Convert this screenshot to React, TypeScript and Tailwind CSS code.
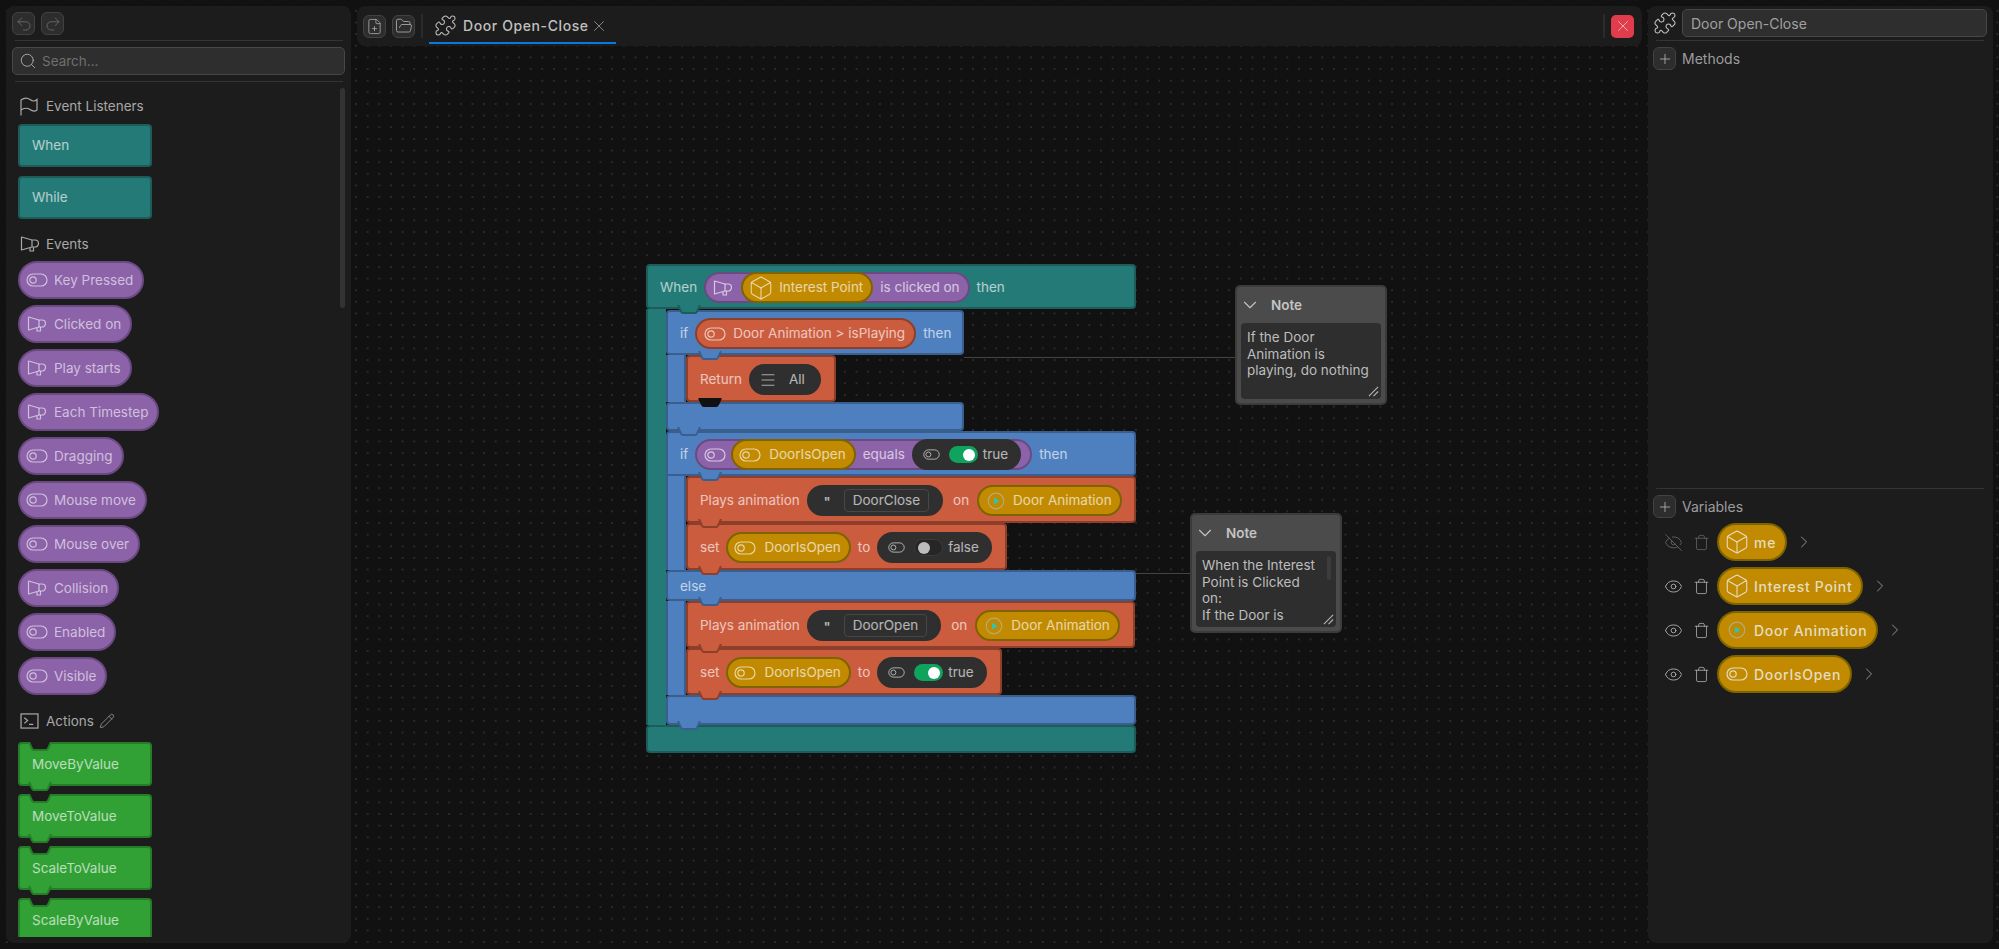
import { ReactNode } from "react";
import {
  Box,
  ChevronDown,
  ChevronRight,
  Eye,
  EyeOff,
  FilePlus,
  FolderOpen,
  Menu,
  Pencil,
  Plus,
  Puzzle,
  Redo2,
  Search,
  Trash,
  Undo2,
  X,
} from "lucide-react";

const PURPLE = "bg-[#8c62a9] border-[#6b4a82]";
const YELLOW = "bg-[#c18a00] border-[#7d6400]";
const ORANGE = "bg-[#cb5c3e] border-[#8e3f2b]";
const DARK = "bg-[#2f2f2f] border-[#2f2f2f]";

const ToggleIcon = ({ className = "" }: { className?: string }) => (
  <svg viewBox="0 0 22 14" fill="none" stroke="currentColor" strokeWidth="1.2" className={`w-[22px] h-[14px] shrink-0 ${className}`}>
    <rect x="1" y="1" width="20" height="12" rx="6" />
    <circle cx="7" cy="7" r="3.2" />
  </svg>
);

const MegaphoneIcon = ({ className = "" }: { className?: string }) => (
  <svg viewBox="0 0 20 16" fill="none" stroke="currentColor" strokeWidth="1.2" strokeLinejoin="round" className={`w-[20px] h-[16px] shrink-0 ${className}`}>
    <path d="M1.5 1 L12 4 H15 a3.5 3.5 0 0 1 0 7 H12 L1.5 14 Z" />
    <path d="M12 4 V11" />
    <path d="M10 12 v3 h3.5 v-4" />
  </svg>
);

const FlagIcon = () => (
  <svg viewBox="0 0 18 19" fill="none" stroke="currentColor" strokeWidth="1.2" className="w-[18px] h-[19px] shrink-0 text-[#a8a8a8]">
    <path d="M1 18.5 V3 C5 0 8 1 10 2.5 C12 4 15 4.5 17 2.5 V13 C14.5 15 12 14 10 12.5 C8 11 4 10.5 1 13" />
  </svg>
);

const TerminalIcon = () => (
  <svg viewBox="0 0 20 17" fill="none" stroke="currentColor" strokeWidth="1.3" className="w-[19px] h-[16px] shrink-0">
    <rect x="1" y="1" width="18" height="15" />
    <path d="M4.5 5 L8 8 L4.5 11 M9.5 12 H14" />
  </svg>
);

const PlayIcon = () => (
  <svg viewBox="0 0 18 18" className="w-[18px] h-[18px] shrink-0" fill="none">
    <circle cx="9" cy="9" r="7.8" stroke="#b8a878" strokeWidth="1.2" />
    <path d="M7 5.5 L12.5 9 L7 12.5 Z" fill="#2cc5b5" />
  </svg>
);

const CubeIcon = () => <Box size={26} strokeWidth={1} className="-mx-[3px] shrink-0" />;

const ResizeIcon = () => (
  <svg viewBox="0 0 12 12" fill="none" stroke="#b5b5b5" strokeWidth="1.2" className="absolute right-[2px] bottom-[2px] w-[11px] h-[11px]">
    <path d="M1 11 L11 1 M6 11 L11 6" />
  </svg>
);

// trapezoid tab under a block, it sits on top of the next block
const Bump = ({ fill, stroke, className }: { fill: string; stroke: string; className: string }) => (
  <svg viewBox="0 0 24 9" width="24" height="9" className={`absolute z-10 ${className}`}>
    <path d="M1 0 L4 6.5 Q4.5 8 6 8 H18 Q19.5 8 20 6.5 L23 0 Z" fill={fill} />
    <path d="M1 0 L4 6.5 Q4.5 8 6 8 H18 Q19.5 8 20 6.5 L23 0" fill="none" stroke={stroke} strokeWidth="2" />
  </svg>
);

const Pill = ({ color, className = "", children }: { color: string; className?: string; children: ReactNode }) => (
  <div className={`flex items-center h-[31px] rounded-full border-2 shrink-0 whitespace-nowrap ${color} ${className}`}>{children}</div>
);

const Switch = ({ on }: { on: boolean }) => (
  <div className={`flex items-center w-[29px] h-[17px] rounded-full px-[3px] ${on ? "bg-[#10a35d] justify-end" : "bg-[#262626] border border-[#3b3b3b] justify-start"}`}>
    <div className={`w-[12px] h-[12px] rounded-full ${on ? "bg-white" : "bg-[#bdbdbd]"}`} />
  </div>
);

const VarPill = ({ icon, label, className = "pl-[8px]" }: { icon: ReactNode; label: string; className?: string }) => (
  <Pill color={YELLOW} className={`pr-[8px] gap-[8px] ${className}`}>
    {icon}
    <span>{label}</span>
  </Pill>
);

const BoolValue = ({ on, label }: { on: boolean; label: string }) => (
  <Pill color={DARK} className="pl-[9px] pr-[11px]">
    <ToggleIcon className="!w-[17px] !h-[11px] mr-[9px]" />
    <Switch on={on} />
    <span className="ml-[5px]">{label}</span>
  </Pill>
);

const StringValue = ({ label }: { label: string }) => (
  <Pill color={DARK} className="pl-[15px] pr-[12px]">
    <span className="w-[20px] text-[12px] font-bold leading-none mt-[3px]">"</span>
    <span className="flex items-center h-[23px] px-[8px] border border-[#474747] rounded-[4px]">{label}</span>
  </Pill>
);

const ActionBlock = ({ width, dark, children }: { width: string; dark?: boolean; children: ReactNode }) => (
  <div className={`relative flex items-center h-[47px] pl-[12px] pt-[2px] gap-[7px] rounded-[4px] border-2 whitespace-nowrap ${ORANGE} ${width}`}>
    {children}
    <Bump
      fill={dark ? "#111111" : "#cb5c3e"}
      stroke={dark ? "#111111" : "#8e3f2b"}
      className="top-full -mt-[2px] left-[10px]"
    />
  </div>
);

const BlueBar = ({ children, width = "w-full", h, bump = true, className = "" }: { children?: ReactNode; width?: string; h: string; bump?: boolean; className?: string }) => (
  <div className={`relative flex items-center pl-[12px] pt-[2px] gap-[7px] bg-[#4e80bf] border-2 border-[#3a5f8f] rounded-[4px] ${h} ${width} ${className}`}>
    {children}
    {bump && <Bump fill="#4e80bf" stroke="#3a5f8f" className="top-full -mt-[2px] left-[9px]" />}
  </div>
);

const BlueRail = ({ children }: { children: ReactNode }) => (
  <div className="flex">
    <div className="w-[20px] shrink-0 bg-[#4e80bf] border-l-2 border-r-2 border-[#3a5f8f]" />
    <div className="flex flex-col flex-1 items-start">{children}</div>
  </div>
);

const RootBlock = () => (
  <div className="absolute left-[289px] top-[258px] w-[490px] flex flex-col text-[13.5px] text-white/65">
    <div className="relative flex items-center h-[45px] pl-[12px] pt-[2px] gap-[7px] bg-[#247a76] border-2 border-[#1d5c59] rounded-[4px]">
      <span>When</span>
      <Pill color={PURPLE} className="pl-[7px] pr-[8px]">
        <MegaphoneIcon className="mr-[8px]" />
        <VarPill icon={<CubeIcon />} label="Interest Point" className="pl-[8px] -my-[2px] mr-[7px]" />
        <span>is clicked on</span>
      </Pill>
      <span>then</span>
      <Bump fill="#247a76" stroke="#1d5c59" className="top-full -mt-[2px] left-[29px]" />
    </div>
    <div className="flex">
      <div className="w-[20px] shrink-0 bg-[#247a76] border-l-2 border-[#1d5c59]" />
      <div className="flex flex-col flex-1 items-start">
        <div className="w-[298px] h-[1px]" />
        <BlueBar h="h-[45px]" width="w-[298px]" bump={false}>
          <span>if</span>
          <Pill color={ORANGE} className="pl-[7px] pr-[9px] gap-[7px]">
            <ToggleIcon />
            <span>Door Animation &gt; isPlaying</span>
          </Pill>
          <span>then</span>
          <Bump fill="#4e80bf" stroke="#3a5f8f" className="top-full -mt-[2px] left-[30px]" />
        </BlueBar>
        <div className="w-[298px]">
          <BlueRail>
            <ActionBlock width="w-[150px]" dark>
              <span>Return</span>
              <Pill color={DARK} className="pl-[8px] pr-[14px]">
                <Menu size={18} strokeWidth={1.2} className="mr-[12px]" />
                <span>All</span>
              </Pill>
            </ActionBlock>
          </BlueRail>
        </div>
        <BlueBar h="h-[29px]" width="w-[298px]" />
        <BlueBar h="h-[45px]" className="rounded-bl-none" bump={false}>
          <span>if</span>
          <Pill color={PURPLE} className="pl-[7px] pr-[9px]">
            <ToggleIcon className="mr-[5px]" />
            <Pill color={YELLOW} className="pl-[6px] pr-[8px] gap-[8px] -my-[2px] mr-[7px]">
              <ToggleIcon />
              <span>DoorIsOpen</span>
            </Pill>
            <span className="mr-[7px]">equals</span>
            <BoolValue on label="true" />
          </Pill>
          <span>then</span>
          <Bump fill="#4e80bf" stroke="#3a5f8f" className="top-full -mt-[2px] left-[30px]" />
        </BlueBar>
        <div className="w-full">
          <BlueRail>
            <ActionBlock width="w-full">
              <span>Plays animation</span>
              <StringValue label="DoorClose" />
              <span className="ml-[3px] mr-[1px]">on</span>
              <VarPill icon={<PlayIcon />} label="Door Animation" />
            </ActionBlock>
            <ActionBlock width="w-[321px]">
              <span>set</span>
              <VarPill icon={<ToggleIcon />} label="DoorIsOpen" className="pl-[6px]" />
              <span>to</span>
              <BoolValue on={false} label="false" />
            </ActionBlock>
          </BlueRail>
        </div>
        <BlueBar h="h-[31px]" bump={false}>
          <span>else</span>
          <Bump fill="#4e80bf" stroke="#3a5f8f" className="top-full -mt-[2px] left-[30px]" />
        </BlueBar>
        <div className="w-full">
          <BlueRail>
            <ActionBlock width="w-[449px]">
              <span>Plays animation</span>
              <StringValue label="DoorOpen" />
              <span className="ml-[3px] mr-[1px]">on</span>
              <VarPill icon={<PlayIcon />} label="Door Animation" />
            </ActionBlock>
            <ActionBlock width="w-[316px]">
              <span>set</span>
              <VarPill icon={<ToggleIcon />} label="DoorIsOpen" className="pl-[6px]" />
              <span>to</span>
              <BoolValue on label="true" />
            </ActionBlock>
          </BlueRail>
        </div>
        <BlueBar h="h-[30px]" />
      </div>
    </div>
    <div className="h-[28px] bg-[#247a76] border-2 border-[#1d5c59] rounded-[4px]" />
  </div>
);

const Note = ({ className, lines, scroll }: { className: string; lines: string[]; scroll?: boolean }) => (
  <div className={`absolute w-[152px] h-[120px] bg-[#4b4b4b] border-2 border-[#3b3b3b] rounded-[5px] p-[4px] flex flex-col ${className}`}>
    <div className="flex items-center h-[28px] mb-[4px] text-[#c4c4c4] text-[13.5px] font-semibold shrink-0">
      <ChevronDown size={22} strokeWidth={1.2} className="-ml-[2px] mr-[10px]" />
      Note
    </div>
    <div className="relative flex-1 overflow-hidden bg-[#2e2e2e] rounded-[4px] px-[6px] pt-[6px] text-[13.5px] leading-[16.5px] text-[#bdbdbd]">
      {lines.map((line) => (
        <div key={line} className="whitespace-nowrap">{line}</div>
      ))}
      {scroll && <div className="absolute right-[5px] top-[5px] w-[4px] h-[24px] bg-[#3c3c3c] rounded-full" />}
      <ResizeIcon />
    </div>
  </div>
);

const IconButton = ({ children, dim }: { children: ReactNode; dim?: boolean }) => (
  <div className={`flex items-center justify-center w-[23px] h-[23px] rounded-[6px] bg-[#2d2d2d] border border-[#424242] shrink-0 ${dim ? "text-[#6a6a6a]" : "text-[#b0b0b0]"}`}>
    {children}
  </div>
);

const SectionTitle = ({ icon, children }: { icon: ReactNode; children: ReactNode }) => (
  <div className="flex items-center h-[20px] pl-[2px] text-[13.5px] text-[#a8a8a8]">
    <div className="w-[26px] text-[#a8a8a8]">{icon}</div>
    {children}
  </div>
);

const events = [
  { label: "Key Pressed", kind: "toggle" },
  { label: "Clicked on", kind: "mega" },
  { label: "Play starts", kind: "mega" },
  { label: "Each Timestep", kind: "mega" },
  { label: "Dragging", kind: "toggle" },
  { label: "Mouse move", kind: "toggle" },
  { label: "Mouse over", kind: "toggle" },
  { label: "Collision", kind: "mega" },
  { label: "Enabled", kind: "toggle" },
  { label: "Visible", kind: "toggle" },
];

const LeftPanel = () => (
  <div className="w-[345px] shrink-0 h-[937px] bg-[#1c1c1c] rounded-[8px] flex flex-col px-[6px] pt-[6px] pb-[6px]">
    <div className="flex gap-[6px]">
      <IconButton dim><Undo2 size={18} strokeWidth={1.2} /></IconButton>
      <IconButton dim><Redo2 size={18} strokeWidth={1.2} /></IconButton>
    </div>
    <div className="h-[1px] bg-[#343434] mt-[5px] mx-[3px] mr-[2px]" />
    <div className="flex items-center h-[28px] mt-[6px] bg-[#2e2e2e] border border-[#474747] rounded-[5px] pl-[6px] text-[13.5px] text-[#6f6f6f]">
      <Search size={18} strokeWidth={1.2} className="text-[#b0b0b0] mr-[5px]" />
      Search...
    </div>
    <div className="h-[1px] bg-[#343434] mt-[6px] mx-[3px] mr-[2px]" />
    <div className="relative flex-1 overflow-hidden pl-[6px] pt-[14px]">
      <div className="absolute right-0 top-[6px] w-[5px] h-[220px] bg-[#333333] rounded-full" />
      <SectionTitle icon={<FlagIcon />}>Event Listeners</SectionTitle>
      <div className="flex flex-col gap-[9px] mt-[8px]">
        {["When", "While"].map((label) => (
          <div key={label} className="flex items-center w-[134px] h-[43px] pl-[12px] bg-[#247a76] border-2 border-[#1d5c59] rounded-[4px] text-[13.5px] text-white/65">
            {label}
          </div>
        ))}
      </div>
      <div className="mt-[15px]">
        <SectionTitle icon={<MegaphoneIcon />}>Events</SectionTitle>
      </div>
      <div className="flex flex-col items-start gap-[6px] mt-[7px]">
        {events.map((item) => (
          <div key={item.label} className={`flex items-center h-[38px] pl-[6px] pr-[9px] gap-[6px] rounded-full border-2 ${PURPLE} text-[13.5px] text-white/60`}>
            {item.kind === "toggle" ? <ToggleIcon /> : <MegaphoneIcon className="mx-[1px]" />}
            {item.label}
          </div>
        ))}
      </div>
      <div className="mt-[16px]">
        <SectionTitle icon={<TerminalIcon />}>
          Actions
          <Pencil size={16} strokeWidth={1.1} className="ml-[5px]" />
        </SectionTitle>
      </div>
      <div className="flex flex-col gap-[8px] mt-[11px]">
        {["MoveByValue", "MoveToValue", "ScaleToValue", "ScaleByValue"].map((label) => (
          <div key={label} className="relative flex items-center w-[134px] h-[44px] shrink-0 pl-[12px] bg-[#31a035] border-2 border-[#267d29] rounded-[4px] text-[13.5px] text-white/65">
            <Bump fill="#1c1c1c" stroke="#267d29" className="-top-[2px] left-[8px]" />
            {label}
            <Bump fill="#31a035" stroke="#267d29" className="top-full -mt-[2px] left-[8px]" />
          </div>
        ))}
      </div>
    </div>
  </div>
);

const variables = [
  { label: "me", icon: <CubeIcon />, hidden: true },
  { label: "Interest Point", icon: <CubeIcon /> },
  { label: "Door Animation", icon: <PlayIcon /> },
  { label: "DoorIsOpen", icon: <ToggleIcon /> },
];

const RightPanel = () => (
  <div className="w-[345px] shrink-0 h-[937px] bg-[#1c1c1c] rounded-[8px] flex flex-col pl-[5px] pr-[6px] pt-[3px]">
    <div className="flex items-center gap-[5px]">
      <Puzzle size={24} strokeWidth={1.1} className="text-[#c0c0c0] shrink-0" />
      <div className="flex items-center flex-1 h-[28px] bg-[#2e2e2e] border border-[#474747] rounded-[5px] pl-[8px] text-[14px] text-[#a0a0a0]">
        Door Open-Close
      </div>
    </div>
    <div className="h-[1px] bg-[#343434] mt-[3px] mx-[3px]" />
    <div className="flex items-center gap-[6px] mt-[6px] text-[14px] text-[#9c9c9c]">
      <IconButton><Plus size={16} strokeWidth={1.3} /></IconButton>
      Methods
    </div>
    <div className="flex-1 max-h-[418px]" />
    <div className="h-[1px] bg-[#343434] mx-[3px]" />
    <div className="flex items-center gap-[6px] mt-[6px] text-[14px] text-[#9c9c9c]">
      <IconButton><Plus size={16} strokeWidth={1.3} /></IconButton>
      Variables
    </div>
    <div className="flex flex-col gap-[6px] mt-[5px] pl-[12px]">
      {variables.map((v) => (
        <div key={v.label} className={`flex items-center h-[38px] ${v.hidden ? "text-[#666666]" : "text-[#b5b5b5]"}`}>
          <div className="w-[30px] shrink-0 -ml-[1px]">
            {v.hidden ? <EyeOff size={19} strokeWidth={1.1} /> : <Eye size={19} strokeWidth={1.1} />}
          </div>
          <div className="w-[22px] shrink-0 -ml-[1px] mr-[2px]">
            <Trash size={17} strokeWidth={1.1} />
          </div>
          <div className={`flex items-center h-[38px] rounded-full border-2 ${YELLOW} pl-[8px] pr-[9px] gap-[7px] text-[14px] font-medium tracking-[0.7px] text-[#e6dcc0]`}>
            <div className="w-[20px] flex justify-center">{v.icon}</div>
            {v.label}
          </div>
          <ChevronRight size={20} strokeWidth={1.1} className="ml-[7px] text-[#9a9a9a]" />
        </div>
      ))}
    </div>
  </div>
);

const TabBar = () => (
  <div className="flex items-center h-[40px] bg-[#1c1c1c] rounded-[8px] pl-[6px] pr-[8px]">
    <div className="flex items-center gap-[6px]">
      <IconButton><FilePlus size={17} strokeWidth={1.1} /></IconButton>
      <IconButton><FolderOpen size={18} strokeWidth={1.1} /></IconButton>
    </div>
    <div className="w-[2px] h-[24px] bg-[#2b2b2b] ml-[6px] mr-[6px]" />
    <div className="relative flex items-center h-[34px] mt-[1px] pl-[5px] pr-[8px] border-b-2 border-[#0a78dc] text-[#c0c0c0]">
      <Puzzle size={23} strokeWidth={1.1} className="mr-[6px]" />
      <span className="text-[14px] font-medium tracking-[0.6px]">Door Open-Close</span>
      <X size={18} strokeWidth={1.1} className="ml-[1px] text-[#9a9a9a]" />
    </div>
    <div className="ml-auto w-[2px] h-[24px] bg-[#2b2b2b] mr-[6px]" />
    <div className="flex items-center justify-center w-[23px] h-[23px] rounded-[5px] bg-[#e03c4c] text-white/70">
      <X size={18} strokeWidth={1.1} />
    </div>
  </div>
);

export default function App() {
  return (
    <div className="h-screen w-full overflow-hidden flex gap-[6px] p-[6px] bg-[#111111] bg-[radial-gradient(#2a2a2a_1px,transparent_1px)] bg-[size:11.65px_11.65px] bg-[position:1px_5px] font-['Inter',sans-serif]">
      <LeftPanel />
      <div className="relative flex-1">
        <TabBar />
        <div className="absolute left-[607px] top-[351px] w-[272px] h-[1px] bg-[#444444]" />
        <div className="absolute left-[779px] top-[567px] w-[56px] h-[1px] bg-[#444444]" />
        <RootBlock />
        <Note className="left-[878px] top-[279px]" lines={["If the Door", "Animation is", "playing, do nothing"]} />
        <Note className="left-[833px] top-[507px]" lines={["When the Interest", "Point is Clicked", "on:", "If the Door is"]} scroll />
      </div>
      <RightPanel />
    </div>
  );
}
